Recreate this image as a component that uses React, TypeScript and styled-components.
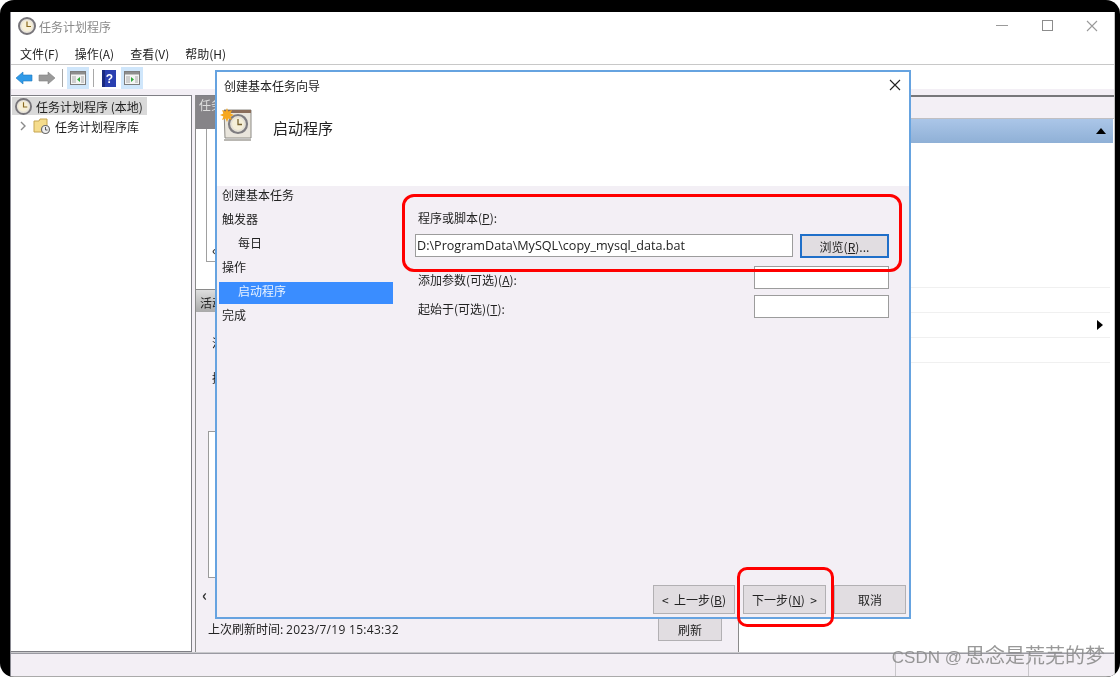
import React from "react";
import styled, { createGlobalStyle } from "styled-components";

const Global = createGlobalStyle`
  html, body { margin: 0; padding: 0; background: #fff; }
  body { font-family: "Noto Sans CJK SC", "Liberation Sans", sans-serif; color: #222; }
`;
const Frame = styled.div`
  position: relative; width: 1120px; height: 677px; box-sizing: border-box;
  background: #000; border-radius: 14px; padding: 12px 5px 0 10px; overflow: hidden;
`;
const Win = styled.div`
  height: 100%; display: flex; flex-direction: column; background: #fff;
  border-left: 1px solid #8a8a92; border-right: 1px solid #c4c4c4; filter: blur(0.45px); font-size: 12px;
`;
const TitleBar = styled.div`
  height: 28px; display: flex; align-items: center; padding: 0 0 0 7px; color: #8a8a8a;
  flex: none;
`;
const TitleText = styled.span`margin-left: 3px;`;
const Spacer = styled.div`flex: 1;`;
const WinBtn = styled.div`
  width: 45px; height: 28px; display: flex; align-items: center; justify-content: center; color: #8c8c8c;
`;
const MenuBar = styled.div`
  height: 25px; flex: none; display: flex; gap: 16px; padding: 3px 0 0 9px; box-sizing: border-box; align-items: center;
  border-bottom: 1px solid #c8c8c8; font-size: 12px;
`;
const ToolBar = styled.div`
  height: 22px; flex: none; display: flex; align-items: center; padding-left: 2px; gap: 1px;
  margin-top: 2px;
`;
const ToolBtn = styled.div<{ $on?: boolean }>`
  width: 22px; height: 22px; display: flex; align-items: center; justify-content: center;
  background: ${p => (p.$on ? "#cfe6fb" : "transparent")};
`;
const ToolSep = styled.div`width: 1px; height: 18px; background: #a8a8a8; margin: 0 3px;`;
const Body = styled.div`
  flex: 1; min-height: 0; display: grid; grid-template-columns: 181px 540px 1fr; gap: 3px;
  background: #f3eff5; padding-top: 6px; border-bottom: 1px solid #c9c9cc;
`;
const Tree = styled.div`
  background: #fff; border: 1px solid #7f7f85; border-left: none; padding: 1px 1px;
  display: flex; flex-direction: column;
`;
const TreeRow = styled.div<{ $sel?: boolean; $indent?: number }>`
  height: 18px; display: inline-flex; align-items: center; gap: 4px; font-size: 12px;
  padding: 0 4px 0 ${p => p.$indent ?? 3}px; align-self: flex-start;
  margin-bottom: 2px; background: ${p => (p.$sel ? "#d9d9d9" : "transparent")};
`;
const Center = styled.div`
  background: #f3eff5; border-left: 1px solid #8a8a8a; display: flex; flex-direction: column;
`;
const GrayHead = styled.div`
  height: 33px; background: #868488; color: #ddd; padding: 0 3px; font-size: 12px; flex: none;
  border-top: 1px solid #7f7f85; line-height: 17px;
`;
const TopArea = styled.div`
  height: 160px; flex: none; background: #fff; padding: 0 0 0 10px; box-sizing: border-box;
`;
const TopBox = styled.div`
  height: 132px; border: 1px solid #a0a0a0; border-top: none; background: #fff; position: relative;
`;
const ScrollMark = styled.span`
  position: absolute; left: 5px; bottom: 5px; font-size: 12px; font-weight: 700; line-height: 12px; color: #333;
`;
const Tab = styled.div`
  height: 23px; flex: none; background: linear-gradient(#dedede, #a9a9a9); padding: 4px 4px 0; box-sizing: border-box;
  font-size: 12px; border-top: 1px solid #8a8a8a;
`;
const Lower = styled.div`
  flex: 1; display: flex; flex-direction: column; padding: 22px 12px 0 12px; min-height: 0; font-size: 12px;
`;
const LowerLine = styled.div`height: 18px; margin-bottom: 17px; padding-left: 4px; white-space: nowrap;`;
const ListBox = styled.div`
  height: 145px; flex: none; background: #fff; border: 1px solid #9b9b9b; margin-top: 27px;
`;
const HScroll = styled.div`
  height: 32px; flex: none; margin-left: -6px; display: flex; align-items: center;
  font-weight: 700; font-size: 16px; color: #333;
`;
const RefreshRow = styled.div`
  display: flex; align-items: center; justify-content: space-between; height: 30px; padding-right: 1px; margin-top: 4px;
`;
const Stamp = styled.span`font-family: "Open Sans", "Liberation Sans", sans-serif; letter-spacing: 0.3px;`;
const Btn = styled.div<{ $w: number; $h: number; $focus?: boolean }>`
  width: ${p => p.$w}px; height: ${p => p.$h}px; box-sizing: border-box; flex: none;
  background: #e1dde1; border: ${p => (p.$focus ? "2px solid #1f6fc9" : "1px solid #b2b0b3")};
  display: flex; align-items: center; justify-content: center; font-size: 12px; color: #222;
`;
const Right = styled.div`
  background: #fff; display: flex; flex-direction: column; border-left: 1px solid #8a8a8a;
  border-top: 2px solid #77777a;
`;
const RightBand = styled.div`height: 21px; flex: none; background: #f3eff5; border-bottom: 1px solid #c0bfc2;`;
const BlueHead = styled.div`
  height: 24px; flex: none; background: linear-gradient(#abc6e8, #8fb0d6); display: flex;
  align-items: center; justify-content: flex-end; padding-right: 7px; margin-right: 1px;
`;
const RightRow = styled.div<{ $h: number }>`
  height: ${p => p.$h}px; flex: none; border-bottom: 1px solid #f0f0f0; display: flex; align-items: center;
  justify-content: flex-end; padding-right: 7px; margin-right: 4px; box-sizing: border-box;
`;
const Status = styled.div`
  height: 22px; flex: none; background: #f3eff5; border-top: 1px solid #9a9aa2; border-bottom: 1px solid #aaa;
  display: grid; grid-template-columns: 885px 133px 1fr;
`;
const StatusCell = styled.div`border-right: 1px solid #c8c6ca;`;
const Dialog = styled.div`
  position: absolute; left: 215px; top: 70px; width: 696px; height: 549px; box-sizing: border-box;
  background: #f3eff5; border: 2px solid #66a3e0; display: flex; flex-direction: column; font-size: 12px;
  filter: blur(0.45px);
`;
const DlgTop = styled.div`height: 114px; flex: none; background: #fff; display: flex; flex-direction: column;`;
const DlgTitle = styled.div`
  height: 26px; display: flex; align-items: center; justify-content: space-between; padding: 0 8px 0 7px; flex: none;
`;
const DlgHead = styled.div`display: flex; align-items: center; gap: 19px; padding: 10px 0 0 3px;`;
const HeadText = styled.div`font-size: 15px; color: #222; padding-top: 4px;`;
const DlgBody = styled.div`
  flex: 1; min-height: 0; display: grid; grid-template-columns: 174px 1fr; position: relative; padding: 0 0 0 2px;
`;
const Side = styled.div`display: flex; flex-direction: column; margin-top: -4px;`;
const SideItem = styled.div<{ $sel?: boolean; $sub?: boolean }>`
  height: 24px; display: flex; align-items: center; box-sizing: border-box;
  padding-left: ${p => (p.$sub ? 19 : 3)}px;
  background: ${p => (p.$sel ? "#3a8dff" : "transparent")};
  color: ${p => (p.$sel ? "#e8f2ff" : "#222")};
  ${p => (p.$sel ? "height: 22px; margin: 4px 0 -2px; padding-bottom: 6px;" : "")}
`;
const Form = styled.div`
  display: flex; flex-direction: column; padding: 23px 21px 0 22px; height: 100%; box-sizing: border-box;
`;
const FormLabel = styled.label`display: block; height: 18px; line-height: 18px; padding-left: 3px; u { text-decoration: underline; }`;
const ArgLabel = styled(FormLabel)`margin-top: 4px;`;
const PathRow = styled.div`display: flex; gap: 7px; margin-top: 7px; align-items: flex-start;`;
const Input = styled.div<{ $w: number }>`
  width: ${p => p.$w}px; flex: none; height: 23px; box-sizing: border-box; background: #fff;
  border: 1px solid #9c9c9c; font-family: "Open Sans", "Liberation Sans", sans-serif; font-size: 12.6px;
  padding-left: 1px; display: flex; align-items: center; white-space: nowrap; color: #222; overflow: hidden;
`;
const ArgRow = styled.div`display: flex; justify-content: space-between; align-items: center; height: 23px; margin-top: 6px;`;
const ArgRowTop = styled(ArgRow)`margin-top: 8px;`;
const Footer = styled.div`
  position: absolute; right: 3px; bottom: 3px; display: flex; gap: 8px;
`;
const Red = styled.div<{ $l: number; $t: number; $w: number; $h: number; $r: number }>`
  position: absolute; left: ${p => p.$l}px; top: ${p => p.$t}px; width: ${p => p.$w}px; height: ${p => p.$h}px;
  box-sizing: border-box; border: 3px solid #f00; border-radius: ${p => p.$r}px;
`;
const Watermark = styled.div`
  position: absolute; right: 15px; bottom: 8px; font-size: 20px; color: #8d8d8d; line-height: 22px;
  white-space: nowrap; display: flex; align-items: baseline; gap: 3px; opacity: 0.9;
`;
const WatermarkLatin = styled.span`font-family: "Liberation Sans", sans-serif; font-size: 17px; white-space: pre;`;

const Clock = ({ s = 18 }: { s?: number }) => (
  <svg width={s} height={s} viewBox="0 0 18 18">
    <circle cx="9" cy="9" r="8" fill="#e8e4da" stroke="#77757a" strokeWidth="2" />
    <circle cx="9" cy="9" r="5.4" fill="#f7f0d8" />
    <path d="M9 4.5V9.5H13" fill="none" stroke="#8a6a20" strokeWidth="1.2" />
  </svg>
);
const Folder = () => (
  <svg width="18" height="18" viewBox="0 0 18 18">
    <path d="M1 4h5l1-2h7v13H1z" fill="#f5dc8c" stroke="#c6a550" />
    <circle cx="12.5" cy="12.5" r="4" fill="#eee" stroke="#6b6b6b" strokeWidth="1.2" />
    <path d="M12.5 10v3h2" fill="none" stroke="#555" />
  </svg>
);
const ArrowL = () => (
  <svg width="18" height="14" viewBox="0 0 18 14">
    <path d="M1 7 8 1v3h9v6H8v3z" fill="#2f9ae8" stroke="#1f78c0" strokeWidth=".6" />
  </svg>
);
const ArrowR = () => (
  <svg width="18" height="14" viewBox="0 0 18 14">
    <path d="M17 7 10 1v3H1v6h9v3z" fill="#9a9a9a" stroke="#808080" strokeWidth=".6" />
  </svg>
);
const Pane = ({ side }: { side: "l" | "r" }) => (
  <svg width="16" height="14" viewBox="0 0 16 14">
    <rect x=".5" y=".5" width="15" height="13" fill="#f4f4f4" stroke="#7d7d7d" />
    <rect x="1" y="1" width="14" height="2.5" fill="#8d8d8d" />
    <rect x="2" y="5" width="4" height="7" fill="#cfcfcf" />
    <rect x="11" y="5" width="3" height="7" fill="#cfcfcf" />
    <path d={side === "l" ? "M10 6v5L7 8.5z" : "M7 6v5l3-2.5z"} fill="#2fa83a" />
  </svg>
);
const Help = () => (
  <svg width="14" height="17" viewBox="0 0 14 17">
    <rect width="14" height="17" fill="#2a3fb0" />
    <rect x="0" y="0" width="3" height="17" fill="#1a2a80" />
    <text x="7.5" y="13" fontSize="12" fontWeight="700" fill="#fff" textAnchor="middle" fontFamily="Liberation Sans">?</text>
  </svg>
);
const WizardIcon = () => (
  <svg width="34" height="34" viewBox="0 0 34 34">
    <path d="M4 2H31V30H5z" fill="#e9e5dc" stroke="#8c8a85" />
    <rect x="4" y="2" width="27" height="3" fill="#8a6d5a" />
    <path d="M4 31H31V33H4z" fill="#b9b7b2" />
    <circle cx="18" cy="16" r="9" fill="#e5e1d6" stroke="#7e7c80" strokeWidth="2.2" />
    <circle cx="18" cy="16" r="6" fill="#f5efd8" />
    <path d="M18 11v5.5h4" fill="none" stroke="#76612e" strokeWidth="1.3" />
    <path d="M7 0l1.3 3.4L12 2 10.5 5.6 14 7l-3.5 1.4L12 12 8.3 10.6 7 14 5.6 10.6 2 12l1.4-3.6L0 7l3.4-1.4L2 2l3.6 1.4z" fill="#f6a820" />
  </svg>
);
const Cross = ({ s, c }: { s: number; c: string }) => (
  <svg width={s} height={s} viewBox="0 0 12 12"><path d="M1 1l10 10M11 1 1 11" stroke={c} strokeWidth="1.1" fill="none" /></svg>
);
const Chevron = () => (
  <svg width="10" height="10" viewBox="0 0 10 10"><path d="M2 1l4 4-4 4" fill="none" stroke="#8a8a8a" strokeWidth="1.4" /></svg>
);

export default function App() {
  return (
    <Frame>
      <Global />
      <Win>
        <TitleBar>
          <Clock />
          <TitleText>任务计划程序</TitleText>
          <Spacer />
          <WinBtn><svg width="12" height="2"><rect width="12" height="1" fill="#9a9a9a" /></svg></WinBtn>
          <WinBtn><svg width="12" height="12"><rect x="1.5" y=".5" width="10" height="10" fill="none" stroke="#8c8c8c" /></svg></WinBtn>
          <WinBtn><Cross s={12} c="#9a9a9a" /></WinBtn>
        </TitleBar>
        <MenuBar>
          <span>文件(F)</span><span>操作(A)</span><span>查看(V)</span><span>帮助(H)</span>
        </MenuBar>
        <ToolBar>
          <ToolBtn><ArrowL /></ToolBtn>
          <ToolBtn><ArrowR /></ToolBtn>
          <ToolSep />
          <ToolBtn $on><Pane side="l" /></ToolBtn>
          <ToolSep />
          <ToolBtn><Help /></ToolBtn>
          <ToolBtn $on><Pane side="r" /></ToolBtn>
        </ToolBar>
        <Body>
          <Tree>
            <TreeRow $sel><Clock s={17} /><span>任务计划程序 (本地)</span></TreeRow>
            <TreeRow $indent={7}><Chevron /><Folder /><span>任务计划程序库</span></TreeRow>
          </Tree>
          <Center>
            <GrayHead>任务</GrayHead>
            <TopArea><TopBox><ScrollMark>‹</ScrollMark></TopBox></TopArea>
            <Tab>活动</Tab>
            <Lower>
              <LowerLine>活动</LowerLine>
              <LowerLine>摘要</LowerLine>
              <ListBox />
              <HScroll>‹</HScroll>
              <RefreshRow>
                <span>上次刷新时间: <Stamp>2023/7/19 15:43:32</Stamp></span>
                <Btn $w={64} $h={23}>刷新</Btn>
              </RefreshRow>
            </Lower>
          </Center>
          <Right>
            <RightBand />
            <BlueHead><svg width="10" height="6"><path d="M0 6 5 0l5 6z" fill="#000" /></svg></BlueHead>
            <RightRow $h={145} />
            <RightRow $h={25} />
            <RightRow $h={25}><svg width="6" height="10"><path d="M0 0l6 5-6 5z" fill="#000" /></svg></RightRow>
            <RightRow $h={25} />
          </Right>
        </Body>
        <Status><StatusCell /><StatusCell /></Status>
      </Win>
      <Dialog>
        <DlgTop>
          <DlgTitle><span>创建基本任务向导</span><Cross s={12} c="#222" /></DlgTitle>
          <DlgHead><WizardIcon /><HeadText>启动程序</HeadText></DlgHead>
        </DlgTop>
        <DlgBody>
          <Side>
            <SideItem>创建基本任务</SideItem>
            <SideItem>触发器</SideItem>
            <SideItem $sub>每日</SideItem>
            <SideItem>操作</SideItem>
            <SideItem $sub $sel>启动程序</SideItem>
            <SideItem>完成</SideItem>
          </Side>
          <Form>
            <FormLabel>程序或脚本(<u>P</u>):</FormLabel>
            <PathRow>
              <Input $w={378}>D:\ProgramData\MySQL\copy_mysql_data.bat</Input>
              <Btn $w={89} $h={24} $focus>浏览(<u>R</u>)...</Btn>
            </PathRow>
            <ArgRowTop>
              <ArgLabel>添加参数(可选)(<u>A</u>):</ArgLabel>
              <Input $w={135} />
            </ArgRowTop>
            <ArgRow>
              <ArgLabel>起始于(可选)(<u>T</u>):</ArgLabel>
              <Input $w={135} />
            </ArgRow>
          </Form>
          <Footer>
            <Btn $w={82} $h={29}>&lt;&nbsp;&nbsp;上一步(<u>B</u>)</Btn>
            <Btn $w={83} $h={29}>下一步(<u>N</u>) &nbsp;&gt;</Btn>
            <Btn $w={72} $h={29}>取消</Btn>
          </Footer>
        </DlgBody>
      </Dialog>
      <Red $l={402} $t={194} $w={500} $h={78} $r={12} />
      <Red $l={737} $t={567} $w={97} $h={60} $r={10} />
      <Watermark><WatermarkLatin>CSDN @</WatermarkLatin><span>思念是荒芜的梦</span></Watermark>
    </Frame>
  );
}
